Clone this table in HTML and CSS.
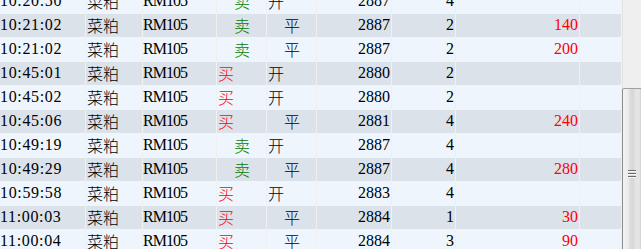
FILE: index.html
```html
<!DOCTYPE html>
<html lang="zh">
<head>
<meta charset="utf-8">
<link rel="stylesheet" href="styles.css">
</head>
<body>
<div class="frame">
  <div class="grid">
    <div class="row light"><div class="c t">10:20:50</div><div class="c n">菜粕</div><div class="c k">RM105</div><div class="c d sell">　卖</div><div class="c o">开</div><div class="c r">2887</div><div class="c r">4</div><div class="c r"></div><div class="c"></div></div>
    <div class="row gray"><div class="c t">10:21:02</div><div class="c n">菜粕</div><div class="c k">RM105</div><div class="c d sell">　卖</div><div class="c o">　平</div><div class="c r">2887</div><div class="c r">2</div><div class="c r red">140</div><div class="c"></div></div>
    <div class="row light"><div class="c t">10:21:02</div><div class="c n">菜粕</div><div class="c k">RM105</div><div class="c d sell">　卖</div><div class="c o">　平</div><div class="c r">2887</div><div class="c r">2</div><div class="c r red">200</div><div class="c"></div></div>
    <div class="row gray"><div class="c t">10:45:01</div><div class="c n">菜粕</div><div class="c k">RM105</div><div class="c d buy">买</div><div class="c o">开</div><div class="c r">2880</div><div class="c r">2</div><div class="c r"></div><div class="c"></div></div>
    <div class="row light"><div class="c t">10:45:02</div><div class="c n">菜粕</div><div class="c k">RM105</div><div class="c d buy">买</div><div class="c o">开</div><div class="c r">2880</div><div class="c r">2</div><div class="c r"></div><div class="c"></div></div>
    <div class="row gray"><div class="c t">10:45:06</div><div class="c n">菜粕</div><div class="c k">RM105</div><div class="c d buy">买</div><div class="c o">　平</div><div class="c r">2881</div><div class="c r">4</div><div class="c r red">240</div><div class="c"></div></div>
    <div class="row light"><div class="c t">10:49:19</div><div class="c n">菜粕</div><div class="c k">RM105</div><div class="c d sell">　卖</div><div class="c o">开</div><div class="c r">2887</div><div class="c r">4</div><div class="c r"></div><div class="c"></div></div>
    <div class="row gray"><div class="c t">10:49:29</div><div class="c n">菜粕</div><div class="c k">RM105</div><div class="c d sell">　卖</div><div class="c o">　平</div><div class="c r">2887</div><div class="c r">4</div><div class="c r red">280</div><div class="c"></div></div>
    <div class="row light"><div class="c t">10:59:58</div><div class="c n">菜粕</div><div class="c k">RM105</div><div class="c d buy">买</div><div class="c o">开</div><div class="c r">2883</div><div class="c r">4</div><div class="c r"></div><div class="c"></div></div>
    <div class="row gray"><div class="c t">11:00:03</div><div class="c n">菜粕</div><div class="c k">RM105</div><div class="c d buy">买</div><div class="c o">　平</div><div class="c r">2884</div><div class="c r">1</div><div class="c r red">30</div><div class="c"></div></div>
    <div class="row light"><div class="c t">11:00:04</div><div class="c n">菜粕</div><div class="c k">RM105</div><div class="c d buy">买</div><div class="c o">　平</div><div class="c r">2884</div><div class="c r">3</div><div class="c r red">90</div><div class="c"></div></div>
  </div>
  <div class="scrollbar">
    <div class="track"></div>
    <div class="thumb"><div class="grip"><span></span><span></span><span></span></div></div>
  </div>
</div>
</body>
</html>
```
FILE: styles.css
```css
html, body {
  margin: 0;
  padding: 0;
  background: #f0f0f0;
  overflow: hidden;
}
.frame {
  display: flex;
  width: 641px;
  height: 249px;
  overflow: hidden;
}
.grid {
  width: 622px;
  flex: none;
  margin-top: -11px;
}
.row {
  display: grid;
  grid-template-columns: 86px 57px 74px 50px 50px 75px 64px 124px 42px;
  height: 24px;
  box-sizing: border-box;
  border-top: 1px solid #f4f4f4;
}
.light { background: #eef5fd; }
.gray { background: #dce2ea; }
.c {
  box-sizing: border-box;
  border-right: 1px solid #f0f0f0;
  font-family: "Liberation Serif", "Noto Sans CJK SC", serif;
  font-size: 16px;
  line-height: 22px;
  color: #000;
  white-space: nowrap;
  overflow: hidden;
}
.t { letter-spacing: 0.65px; }
.n, .d, .o {
  font-family: "Noto Sans CJK SC", sans-serif;
  font-weight: 300;
  padding-left: 1px;
}
.k { letter-spacing: -1px; }
.r { text-align: right; padding-right: 1px; }
.sell { color: #008000; }
.buy { color: #ff0000; }
.red { color: #ff0000; }
.scrollbar {
  width: 19px;
  flex: none;
  display: flex;
  flex-direction: column;
  background: #ececec;
}
.track {
  height: 88px;
  flex: none;
  background: #efefef;
  border-left: 1px solid #e4e4e4;
}
.thumb {
  flex: 1;
  box-sizing: border-box;
  border-left: 1px solid #8c8c8c;
  border-top: 1px solid #a0a0a0;
  border-radius: 2px 0 0 0;
  background: linear-gradient(to right, #f2f2f2 0px, #ececec 5px, #dcdcdc 7px, #d6d6d6 10px, #e2e2e2 12px, #e6e6e6 16px, #d0d0d0 18px);
  display: flex;
  justify-content: center;
  padding-top: 81px;
}
.grip {
  display: flex;
  flex-direction: column;
  gap: 1px;
  width: 8px;
}
.grip span {
  display: block;
  height: 1px;
  background: #6a6a6a;
  border-bottom: 1px solid #f8f8f8;
}
```
